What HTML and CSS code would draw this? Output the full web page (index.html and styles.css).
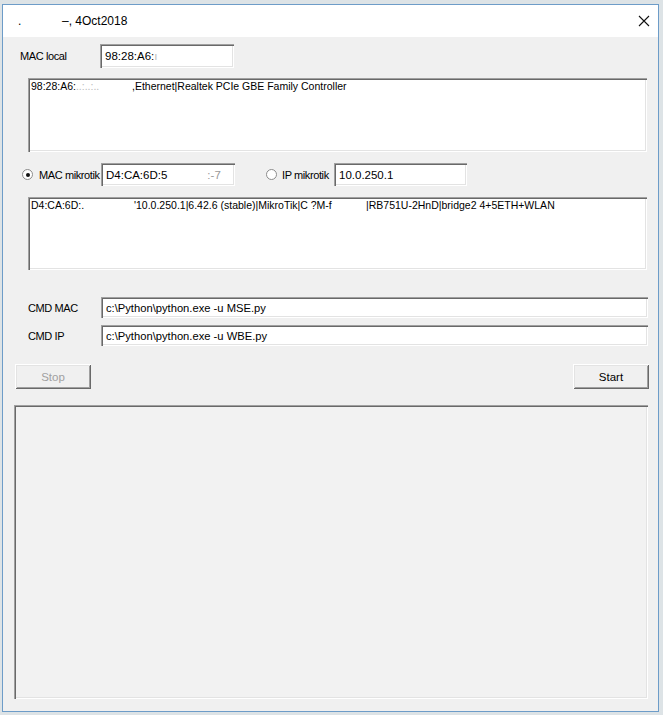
FILE: index.html
```html
<!DOCTYPE html>
<html lang="en">
<head>
    <meta charset="UTF-8">
    <title>4Oct2018</title>
    <link rel="stylesheet" href="styles.css">
</head>
<body>
    <div class="window">
        <!-- barre de titre -->
        <div class="titlebar">
            <span class="title-dot">.</span>
            <span class="title-text">–, 4Oct2018</span>
            <svg class="close" width="12" height="12" viewBox="0 0 12 12">
                <path d="M1 1 L11 11 M11 1 L1 11" stroke="#111" stroke-width="1.1" fill="none"/>
            </svg>
        </div>

        <div class="client">
            <div class="row row-local">
                <span class="lbl lbl-local">MAC local</span>
                <div class="entry entry-mac">98:28:A6:<span class="faint">ı</span></div>
            </div>

            <div class="textbox tb-local">
                <span class="seg seg-mac1">98:28:A6:<span class="faint">..:..:..</span></span><span class="seg">,Ethernet|Realtek PCIe GBE Family Controller</span>
            </div>

            <div class="row row-mikrotik">
                <span class="radio checked"></span>
                <span class="lbl lbl-radio">MAC mikrotik</span>
                <div class="entry entry-mac">D4:CA:6D:5<span class="gap">:-7</span></div>
                <span class="radio radio-ip"></span>
                <span class="lbl lbl-radio-ip">IP mikrotik</span>
                <div class="entry entry-ip">10.0.250.1</div>
            </div>

            <div class="textbox tb-mikrotik">
                <span class="seg seg-mac2">D4:CA:6D:.</span><span class="seg seg-info">'10.0.250.1|6.42.6 (stable)|MikroTik|C&nbsp;?M-f</span><span class="seg">|RB751U-2HnD|bridge2 4+5ETH+WLAN</span>
            </div>

            <div class="row row-cmd">
                <span class="lbl lbl-cmd">CMD MAC</span>
                <div class="entry entry-cmd">c:\Python\python.exe -u MSE.py</div>
            </div>
            <div class="row row-cmd row-cmd-ip">
                <span class="lbl lbl-cmd">CMD IP</span>
                <div class="entry entry-cmd">c:\Python\python.exe -u WBE.py</div>
            </div>

            <div class="row row-buttons">
                <button class="btn btn-stop" disabled>Stop</button>
                <button class="btn btn-start">Start</button>
            </div>

            <!-- zone de sortie -->
            <div class="output"></div>
        </div>
    </div>
</body>
</html>
```

FILE: styles.css
```css
body {
    margin: 0;
    background-color: #dde3e6;
    font-family: "Liberation Sans", Arial, sans-serif;
    font-size: 11px;
    color: #000;
    height: 715px;
    overflow: hidden;
}
.window {
    margin: 4px 0 0 2px;
    width: 655px;
    height: 706px;
    border: 1px solid #6d9cc8;
    background-color: #f0f0f0;
    display: flex;
    flex-direction: column;
}
.titlebar {
    height: 32px;
    background-color: #fff;
    display: flex;
    align-items: center;
    font-size: 12px;
}
.title-dot {
    margin-left: 15px;
    width: 44px;
}
.title-text {
    flex: 1;
}
.close {
    margin-right: 8px;
}
.client {
    flex: 1;
    display: flex;
    flex-direction: column;
}
.row {
    display: flex;
    align-items: center;
}
.lbl {
    white-space: nowrap;
    letter-spacing: -0.4px;
}
/* champs "enfoncés" */
.entry, .textbox {
    background-color: #fff;
    box-shadow: inset 1px 1px #a0a0a0, inset 2px 2px #696969, inset -1px -1px #fff, inset -2px -2px #e3e3e3;
    white-space: nowrap;
    overflow: hidden;
    box-sizing: border-box;
}
.entry {
    display: flex;
    align-items: center;
    padding-left: 5px;
    font-size: 11.5px;
}
.faint {
    color: #bbb;
}
.gap {
    color: #999;
    margin-left: 40px;
}
.row-local {
    margin-top: 7px;
    height: 24px;
}
.lbl-local {
    margin-left: 17px;
    width: 80px;
}
.entry-mac {
    width: 134px;
    height: 100%;
}
.textbox {
    margin-left: 25px;
    width: 619px;
    padding: 1px 3px;
    font-size: 10.5px;
    line-height: 14px;
}
.seg {
    display: inline-block;
}
.tb-local {
    margin-top: 10px;
    height: 74px;
}
.seg-mac1 {
    width: 101px;
}
.row-mikrotik {
    margin-top: 11px;
    height: 23px;
}
.radio {
    width: 11px;
    height: 11px;
    border-radius: 50%;
    border: 1px solid #8c8c8c;
    background-color: #fff;
    box-sizing: border-box;
    margin-left: 19px;
    margin-right: 5px;
    display: flex;
    align-items: center;
    justify-content: center;
}
.radio.checked::after {
    content: "";
    width: 4px;
    height: 4px;
    border-radius: 50%;
    background-color: #111;
}
.lbl-radio {
    width: 62px;
    margin-left: 1px;
}
.radio-ip {
    margin-left: 31px;
}
.lbl-radio-ip {
    width: 52px;
}
.entry-ip {
    width: 133px;
    height: 100%;
}
.tb-mikrotik {
    margin-top: 11px;
    height: 73px;
}
.seg-mac2 {
    width: 103px;
}
.seg-info {
    width: 232px;
}
.row-cmd {
    margin-top: 27px;
    height: 21px;
}
.row-cmd-ip {
    margin-top: 7px;
}
.lbl-cmd {
    margin-left: 25px;
    width: 73px;
}
.entry-cmd {
    width: 547px;
    height: 100%;
    font-size: 11.2px;
}
.row-buttons {
    margin-top: 18px;
    height: 25px;
    justify-content: space-between;
    padding: 0 9px 0 12px;
}
.btn {
    width: 76px;
    height: 25px;
    font-family: "Liberation Sans", Arial, sans-serif;
    font-size: 11.5px;
    background-color: #f0f0f0;
    border: none;
    box-shadow: inset 1px 1px #fff, inset -1px -1px #696969, inset 2px 2px #e3e3e3, inset -2px -2px #a0a0a0;
    color: #000;
    padding: 0;
}
.btn-stop {
    color: #a0a0a0;
}
.output {
    margin: 16px 0 0 11px;
    width: 634px;
    height: 294px;
    background-color: #f2f2f2;
    box-shadow: inset 1px 1px #a0a0a0, inset 2px 2px #696969, inset -1px -1px #fff, inset -2px -2px #e3e3e3;
}
```
